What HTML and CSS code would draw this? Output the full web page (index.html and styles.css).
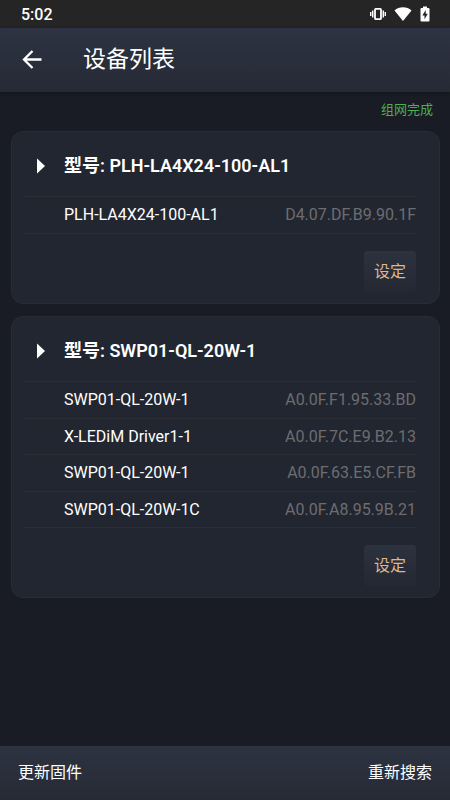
FILE: index.html
```html
<!DOCTYPE html>
<html lang="zh-CN">
<head>
<meta charset="utf-8">
<meta name="viewport" content="width=device-width, initial-scale=1">
<title>设备列表</title>
<link rel="stylesheet" href="styles.css">
</head>
<body>
<div class="status-bar">
  <span class="clock">5:02</span>
  <div class="status-icons">
    <svg width="16" height="14" viewBox="0 0 16 14" aria-hidden="true"><g fill="none" stroke="#fff"><rect x="5" y="1.8" width="6" height="10.4" rx=".8" stroke-width="1.8"/><path d="M2.700 3.500v7M13.300 3.500v7" stroke-width="1.500"/><path d="M.7 5v4M15.300 5v4" stroke-width="1.400"/></g></svg>
    <svg class="wifi" width="18" height="14" viewBox="0 0 18 14" aria-hidden="true"><path d="M9 14 .5 3.4C2.8 1.3 5.7.2 9 .2s6.200 1.100 8.500 3.200z" fill="#fff"/></svg>
    <svg width="10" height="16" viewBox="0 0 10 16" aria-hidden="true"><path d="M3 .5h4V2h1.500q1 0 1 1v11.500q0 1-1 1h-7q-1 0-1-1V3q0-1 1-1H3z" fill="#fff"/><path d="M5.700 4 2.300 9.400h2.200v3.800l3.300-5.400H5.700z" fill="#252525"/></svg>
  </div>
</div>
<header class="app-bar">
  <button class="back" type="button" aria-label="返回">
    <svg width="20" height="20" viewBox="0 0 20 20" aria-hidden="true"><path d="M19.500 9.500H2.500M10.500 1 2 9.500l8.500 8.500" fill="none" stroke="#fff" stroke-width="2.300"/></svg>
  </button>
  <h1>设备列表</h1>
</header>
<main>
  <p class="network-state">组网完成</p>
  <section class="card">
    <h2><button class="toggle" type="button"><svg width="8" height="16" viewBox="0 0 8 16" aria-hidden="true"><path d="M0 .5 8 8 0 15.500z" fill="#fff"/></svg><span>型号: PLH-LA4X24-100-AL1</span></button></h2>
    <ul class="devices">
      <li><span>PLH-LA4X24-100-AL1</span><span class="address">D4.07.DF.B9.90.1F</span></li>
    </ul>
    <button class="configure" type="button">设定</button>
  </section>
  <section class="card">
    <h2><button class="toggle" type="button"><svg width="8" height="16" viewBox="0 0 8 16" aria-hidden="true"><path d="M0 .5 8 8 0 15.500z" fill="#fff"/></svg><span>型号: SWP01-QL-20W-1</span></button></h2>
    <ul class="devices">
      <li><span>SWP01-QL-20W-1</span><span class="address">A0.0F.F1.95.33.BD</span></li>
      <li><span>X-LEDiM Driver1-1</span><span class="address">A0.0F.7C.E9.B2.13</span></li>
      <li><span>SWP01-QL-20W-1</span><span class="address">A0.0F.63.E5.CF.FB</span></li>
      <li><span>SWP01-QL-20W-1C</span><span class="address">A0.0F.A8.95.9B.21</span></li>
    </ul>
    <button class="configure" type="button">设定</button>
  </section>
</main>
<footer class="bottom-bar">
  <button type="button">更新固件</button>
  <button type="button">重新搜索</button>
</footer>
</body>
</html>
```
FILE: styles.css
```css
* {
  box-sizing: border-box;
}

body {
  margin: 0;
  min-height: 100vh;
  display: flex;
  flex-direction: column;
  background: #191c24;
  color: #fff;
  font: 16px/24px Roboto, "Noto Sans CJK SC", sans-serif;
}

button {
  padding: 0;
  border: 0;
  background: none;
  color: inherit;
  font: inherit;
  cursor: pointer;
}

svg {
  display: block;
  flex: none;
}

h1,
h2,
p,
ul {
  margin: 0;
  padding: 0;
}

.status-bar {
  height: 28px;
  padding: 2px 20px 0 21px;
  display: flex;
  align-items: center;
  justify-content: space-between;
  background: #252525;
}

.clock {
  font-weight: 500;
  font-size: 16px;
}

.status-icons {
  padding-bottom: 2px;
  display: flex;
  align-items: center;
  gap: 8px;
}

.app-bar {
  height: 64px;
  padding: 0 22px;
  display: flex;
  align-items: center;
  gap: 41px;
  background: linear-gradient(#2d3342, #262a35);
  box-shadow: 0 1px 3px #15161a;
}

.app-bar h1 {
  font-size: 23px;
  line-height: 32px;
  font-weight: 400;
}

main {
  flex: 1;
  padding: 6px 10px 24px 11px;
}

.network-state {
  padding: 0 7px;
  margin-bottom: 9px;
  color: #4caf50;
  font-size: 13px;
  text-align: right;
}

.card {
  margin-bottom: 12px;
  padding: 12px 23px 11px 12px;
  display: flex;
  flex-direction: column;
  background: #222630;
  border: 1px solid #2b2c32;
  border-radius: 12px;
}

.card h2 {
  font-size: 18px;
  font-weight: 600;
}

.toggle {
  width: 100%;
  height: 44px;
  padding-left: 13px;
  display: flex;
  align-items: center;
  gap: 19px;
  text-align: left;
}

.devices {
  margin-top: 8px;
  list-style: none;
  border-top: 1px solid #2d2e34;
}

.devices li {
  height: 37px;
  padding-left: 40px;
  display: flex;
  align-items: center;
  justify-content: space-between;
  border-bottom: 1px solid #2d2e34;
}

.devices li:nth-child(even) {
  height: 36px;
}

.address {
  color: #6d6d70;
}

.configure {
  align-self: flex-end;
  width: 52px;
  height: 41px;
  margin-top: 17px;
  border-radius: 4px;
  background: linear-gradient(#2d3240, #242832);
  color: #dcb78f;
}

.bottom-bar {
  height: 54px;
  padding: 0 18px;
  display: flex;
  align-items: center;
  justify-content: space-between;
  background: linear-gradient(#2d3341, #262a35);
}
```
